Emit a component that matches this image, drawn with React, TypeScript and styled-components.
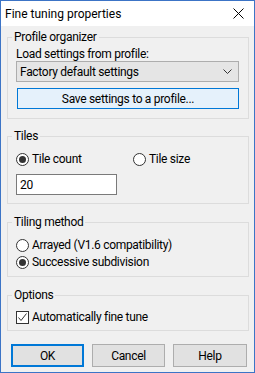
import styled, { createGlobalStyle } from 'styled-components';

const GlobalStyle = createGlobalStyle`
  html, body {
    margin: 0;
    padding: 0;
    background: #f0f0f0;
  }
  body {
    font-family: Roboto, "Noto Sans", "Liberation Sans", sans-serif;
    font-size: 12px;
    color: #000;
  }
`;

const colors = {
  accent: '#3c74c6',
  face: '#f0f0f0',
  groupLine: '#dcdcdc',
  buttonFace: '#e1e1e1',
  buttonLine: '#adadad',
  focus: '#0078d7',
  glyph: '#333333',
};

const Styled = {
  Window: styled.div`
    width: 255px;
    height: 373px;
    box-sizing: border-box;
    border: 1px solid ${colors.accent};
    background: ${colors.face};
    display: flex;
    flex-direction: column;
  `,
  TitleBar: styled.div`
    height: 25px;
    background: #fff;
    display: flex;
    align-items: center;
    justify-content: space-between;
    padding: 0 10px 0 4px;
  `,
  Title: styled.span`
    font-size: 12px;
    line-height: 16px;
    margin-top: 1px;
  `,
  Body: styled.div`
    flex: 1;
    display: flex;
    flex-direction: column;
    padding: 3px 5px 3px 6px;
    letter-spacing: -0.3px;
  `,
  Group: styled.fieldset<{ $gap: number; $bottom: number }>`
    margin: ${(p) => p.$gap}px 0 0;
    padding: 0 9px ${(p) => p.$bottom}px 8px;
    border: 1px solid ${colors.groupLine};
    min-width: 0;
  `,
  Legend: styled.legend`
    margin-left: -4px;
    padding: 0 2px;
    line-height: 16px;
    height: 16px;
  `,
  Caption: styled.div`
    line-height: 14px;
    margin-top: 2px;
  `,
  Select: styled.div`
    height: 21px;
    box-sizing: border-box;
    border: 1px solid ${colors.buttonLine};
    background: #e5e5e5;
    display: flex;
    align-items: center;
    justify-content: space-between;
    padding: 0 6px 0 3px;
  `,
  WideButton: styled.div`
    margin: 6px 0 0 1px;
    height: 21px;
    box-sizing: border-box;
    border: 1px solid ${colors.focus};
    background: #e5f1fb;
    display: flex;
    align-items: center;
    justify-content: center;
  `,
  RadioRow: styled.div<{ $top: number }>`
    display: flex;
    align-items: center;
    height: 16px;
    margin-top: ${(p) => p.$top}px;
  `,
  Choice: styled.label<{ $width?: number }>`
    display: flex;
    align-items: center;
    gap: 3px;
    width: ${(p) => (p.$width ? `${p.$width}px` : 'auto')};
    line-height: 16px;
  `,
  Radio: styled.span<{ $on?: boolean }>`
    width: 13px;
    height: 13px;
    box-sizing: border-box;
    border-radius: 50%;
    border: 1px solid ${colors.glyph};
    background: #fff;
    display: flex;
    align-items: center;
    justify-content: center;
    &::after {
      content: '';
      width: 7px;
      height: 7px;
      border-radius: 50%;
      background: ${(p) => (p.$on ? colors.glyph : 'transparent')};
    }
  `,
  Check: styled.span`
    width: 13px;
    height: 13px;
    box-sizing: border-box;
    border: 1px solid ${colors.glyph};
    background: #fff;
    display: flex;
    align-items: center;
    justify-content: center;
  `,
  TextBox: styled.div`
    margin-top: 7px;
    width: 101px;
    height: 21px;
    box-sizing: border-box;
    border: 1px solid #7a7a7a;
    background: #fff;
    display: flex;
    align-items: center;
    padding-left: 3px;
  `,
  Buttons: styled.div`
    margin-top: 13px;
    display: flex;
    justify-content: flex-end;
    gap: 8px;
    padding-right: 2px;
  `,
  Button: styled.div<{ $default?: boolean; $width: number }>`
    width: ${(p) => p.$width}px;
    height: 23px;
    box-sizing: border-box;
    border: ${(p) => (p.$default ? `2px solid ${colors.focus}` : `1px solid ${colors.buttonLine}`)};
    background: ${colors.buttonFace};
    display: flex;
    align-items: center;
    justify-content: center;
  `,
};

const CloseIcon = () => (
  <svg width="11" height="11" viewBox="0 0 11 11">
    <path d="M0.5 0.5 L10.5 10.5 M10.5 0.5 L0.5 10.5" stroke="#000" strokeWidth="1" />
  </svg>
);

const Chevron = () => (
  <svg width="9" height="5" viewBox="0 0 9 5">
    <path d="M0.5 0.5 L4.5 4.5 L8.5 0.5" stroke="#333" strokeWidth="1" fill="none" />
  </svg>
);

const Tick = () => (
  <svg width="11" height="11" viewBox="0 0 11 11">
    <path d="M1.5 5.5 L4 8.5 L9.5 1.5" stroke="#333" strokeWidth="1" fill="none" />
  </svg>
);

export const App = () => (
  <>
    <GlobalStyle />
    <Styled.Window>
      <Styled.TitleBar>
        <Styled.Title>Fine tuning properties</Styled.Title>
        <CloseIcon />
      </Styled.TitleBar>
      <Styled.Body>
        <Styled.Group $gap={0} $bottom={9}>
          <Styled.Legend>Profile organizer</Styled.Legend>
          <Styled.Caption>Load settings from profile:</Styled.Caption>
          <Styled.Select>
            <span>Factory default settings</span>
            <Chevron />
          </Styled.Select>
          <Styled.WideButton>Save settings to a profile...</Styled.WideButton>
        </Styled.Group>

        <Styled.Group $gap={9} $bottom={8}>
          <Styled.Legend>Tiles</Styled.Legend>
          <Styled.RadioRow $top={7}>
            <Styled.Choice $width={117}>
              <Styled.Radio $on />
              Tile count
            </Styled.Choice>
            <Styled.Choice>
              <Styled.Radio />
              Tile size
            </Styled.Choice>
          </Styled.RadioRow>
          <Styled.TextBox>20</Styled.TextBox>
        </Styled.Group>

        <Styled.Group $gap={10} $bottom={6}>
          <Styled.Legend>Tiling method</Styled.Legend>
          <Styled.RadioRow $top={7}>
            <Styled.Choice>
              <Styled.Radio />
              Arrayed (V1.6 compatibility)
            </Styled.Choice>
          </Styled.RadioRow>
          <Styled.RadioRow $top={1}>
            <Styled.Choice>
              <Styled.Radio $on />
              Successive subdivision
            </Styled.Choice>
          </Styled.RadioRow>
        </Styled.Group>

        <Styled.Group $gap={10} $bottom={5}>
          <Styled.Legend>Options</Styled.Legend>
          <Styled.RadioRow $top={6}>
            <Styled.Choice>
              <Styled.Check>
                <Tick />
              </Styled.Check>
              Automatically fine tune
            </Styled.Choice>
          </Styled.RadioRow>
        </Styled.Group>

        <Styled.Buttons>
          <Styled.Button $default $width={73}>OK</Styled.Button>
          <Styled.Button $width={73}>Cancel</Styled.Button>
          <Styled.Button $width={74}>Help</Styled.Button>
        </Styled.Buttons>
      </Styled.Body>
    </Styled.Window>
  </>
);

export default App;
